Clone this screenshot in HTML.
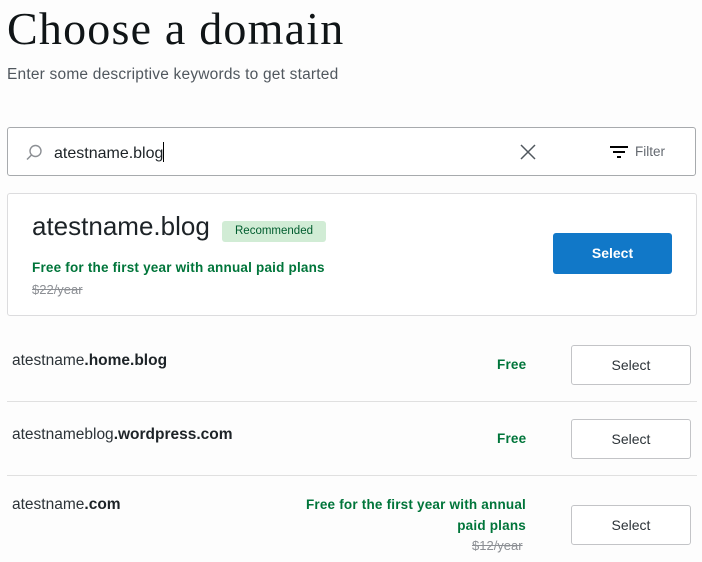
<!DOCTYPE html>
<html><head><meta charset="utf-8"><style>
body{margin:0;background:#fdfdfd;width:702px;height:562px;overflow:hidden;font-family:"Liberation Sans",sans-serif;color:#1d2327;position:relative}
.a{position:absolute}
h1{position:absolute;left:7px;top:2px;margin:0;font-family:"Liberation Serif",serif;font-weight:400;font-size:46px;color:#101517;letter-spacing:1.2px}
.sub{left:7px;top:66px;font-size:15.5px;color:#50575e;letter-spacing:0.2px}
.search{left:7px;top:127px;width:687px;height:47px;border:1px solid #a7aaad;border-radius:3px;background:#fff}
.card{left:7px;top:193px;width:688px;height:121px;border:1px solid #dcdcde;border-radius:3px;background:#fff}
.btn{position:absolute;width:118px;height:38px;border:1px solid #c3c4c7;border-radius:3px;background:#fff;font-size:14px;color:#2c3338;text-align:center;line-height:38px;font-weight:500}
.green{color:#00753a;font-weight:bold;font-size:13.5px;letter-spacing:0.2px}
.strike{color:#8c8f94;text-decoration:line-through;font-size:13px}
.dom{font-size:15.5px;color:#2c3338}
.dom b{color:#1d2327}
.hr{left:7px;width:690px;height:1px;background:#e0e0e0}
</style></head><body>
<h1>Choose a domain</h1>
<div class="a sub">Enter some descriptive keywords to get started</div>
<div class="a search">
 <svg class="a" style="left:16px;top:15px" width="20" height="20" viewBox="0 0 20 20"><circle cx="11.5" cy="8" r="5.5" fill="none" stroke="#8c8f94" stroke-width="1.4"/><line x1="7.5" y1="12" x2="3" y2="16.5" stroke="#8c8f94" stroke-width="1.5"/></svg>
 <div class="a" style="left:46px;top:14px;font-size:16px;color:#1d2327">atestname.blog<span style="display:inline-block;width:1px;height:20px;background:#000;vertical-align:-4px"></span></div>
 <svg class="a" style="left:512px;top:16px" width="16" height="16" viewBox="0 0 16 16"><path d="M1 1L15 15M15 1L1 15" stroke="#50575e" stroke-width="1.5"/></svg>
 <svg class="a" style="left:601px;top:17px" width="20" height="14" viewBox="0 0 20 14"><path d="M1 2H19M4 7H16M8 12H12" stroke="#000" stroke-width="2"/></svg>
 <div class="a" style="left:627px;top:16px;font-size:13.5px;color:#646970">Filter</div>
</div>
<div class="a card">
 <div class="a" style="left:24px;top:17px;font-size:26px;color:#1d2327">atestname.blog</div>
 <div class="a" style="left:214px;top:27px;width:104px;height:21px;background:#d1ecd5;border-radius:3px;font-size:11.5px;line-height:21px;text-align:center;color:#005c2e">Recommended</div>
 <div class="a green" style="left:24px;top:66px">Free for the first year with annual paid plans</div>
 <div class="a strike" style="left:24px;top:88px">$22/year</div>
 <div class="a" style="left:545px;top:39px;width:119px;height:41px;background:#1178c8;border-radius:3px;color:#fff;font-weight:bold;font-size:14px;text-align:center;line-height:41px">Select</div>
</div>
<div class="a dom" style="left:12px;top:352px">atestname<b>.home.blog</b></div>
<div class="a green" style="left:497px;top:357px">Free</div>
<div class="btn" style="left:571px;top:345px">Select</div>
<div class="a hr" style="top:401px"></div>
<div class="a dom" style="left:12px;top:426px">atestnameblog<b>.wordpress.com</b></div>
<div class="a green" style="left:497px;top:431px">Free</div>
<div class="btn" style="left:571px;top:419px">Select</div>
<div class="a hr" style="top:475px"></div>
<div class="a dom" style="left:12px;top:496px">atestname<b>.com</b></div>
<div class="a green" style="left:270px;top:494px;width:256px;text-align:right;line-height:21px">Free for the first year with annual<br>paid plans</div>
<div class="a strike" style="left:472px;top:538px">$12/year</div>
<div class="btn" style="left:571px;top:505px">Select</div>
</body></html>
